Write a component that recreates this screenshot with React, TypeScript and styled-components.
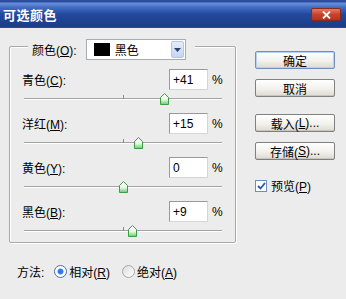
import styled, { createGlobalStyle } from "styled-components";

const GlobalStyle = createGlobalStyle`
  html, body {
    margin: 0;
    padding: 0;
    background: #ececec;
  }
  body {
    font-family: "Liberation Sans", "Noto Sans CJK SC", sans-serif;
    font-size: 12px;
    color: #000;
  }
`;

interface Channel {
  name: string;
  key: string;
  value: number;
}

const channels: Channel[] = [
  { name: "青色", key: "C", value: 41 },
  { name: "洋红", key: "M", value: 15 },
  { name: "黄色", key: "Y", value: 0 },
  { name: "黑色", key: "B", value: 9 },
];

const Window = styled.div`
  width: 346px;
  height: 299px;
  overflow: hidden;
  display: flex;
  flex-direction: column;
  background: #ececec;
`;

const TitleBar = styled.div`
  height: 28px;
  flex: none;
  box-sizing: border-box;
  display: flex;
  align-items: center;
  justify-content: space-between;
  padding: 0 5px 0 3px;
  background: linear-gradient(
    180deg,
    #2b4e9e 0px,
    #2b4e9e 2px,
    #6b90da 3px,
    #4470c6 7px,
    #24499c 14px,
    #1b3d88 26px,
    #2a4f9a 28px
  );
`;

const Title = styled.div`
  color: #fff;
  font-family: "Noto Sans CJK SC", sans-serif;
  font-weight: 700;
  font-size: 13px;
  letter-spacing: 0.5px;
  padding-top: 1px;
`;

const CloseButton = styled.div`
  width: 30px;
  height: 13px;
  box-sizing: border-box;
  border: 1px solid #8a2a1e;
  border-radius: 2px;
  background: linear-gradient(180deg, #e57a62, #c9432c 50%, #b23420);
  display: flex;
  align-items: center;
  justify-content: center;
  margin-top: 1px;
`;

const Body = styled.div`
  flex: 1;
  display: flex;
`;

const LeftColumn = styled.div`
  width: 236px;
  flex: none;
  box-sizing: border-box;
  padding: 18px 0 0 9px;
  display: flex;
  flex-direction: column;
`;

const GroupBox = styled.div`
  box-sizing: border-box;
  width: 227px;
  border: 1px solid #a9a9a9;
  border-radius: 2px;
  box-shadow: 1px 1px 0 #fff, inset 1px 1px 0 #fff;
  padding-bottom: 5px;
  display: flex;
  flex-direction: column;
`;

const GroupHeader = styled.div`
  align-self: flex-start;
  display: flex;
  align-items: center;
  margin: -8px 0 0 18px;
  padding: 0 9px 0 4px;
  background: #ececec;
`;

const HeaderLabel = styled.span`
  margin-right: 9px;
`;

const Dropdown = styled.div`
  width: 100px;
  height: 21px;
  box-sizing: border-box;
  border: 1px solid #a5acb2;
  background: #fff;
  display: flex;
  align-items: center;
  padding-left: 7px;
`;

const Swatch = styled.div`
  width: 16px;
  height: 13px;
  background: #000;
`;

const DropdownText = styled.span`
  margin-left: 5px;
`;

const DropdownArrow = styled.div`
  margin-left: auto;
  margin-right: 1px;
  width: 13px;
  height: 17px;
  box-sizing: border-box;
  border: 1px solid #b6c7ea;
  border-radius: 2px;
  background: linear-gradient(180deg, #e4ecfb, #c5d5f3);
  display: flex;
  align-items: center;
  justify-content: center;
`;

const ChannelList = styled.div`
  display: flex;
  flex-direction: column;
  gap: 8px;
  margin-top: 9px;
`;

const ChannelRow = styled.div`
  display: flex;
  flex-direction: column;
`;

const FieldLine = styled.div`
  display: flex;
  align-items: center;
  height: 21px;
  padding-left: 12px;
`;

const FieldLabel = styled.span`
  width: 147px;
`;

const ValueBox = styled.div`
  width: 39px;
  height: 21px;
  box-sizing: border-box;
  background: #fff;
  border: 1px solid;
  border-color: #9a9a9a #d6d6d6 #d6d6d6 #9a9a9a;
  padding-left: 3px;
  display: flex;
  align-items: center;
`;

const Percent = styled.span`
  margin-left: 4px;
`;

const SliderWrap = styled.div`
  position: relative;
  height: 12px;
  margin: 3px 13px 0 14px;
`;

const Track = styled.div`
  margin-top: 5px;
  height: 0;
  border-top: 1px solid #a3a3a3;
  border-bottom: 1px solid #ffffff;
`;

const Tick = styled.div`
  position: absolute;
  left: 50%;
  top: 2px;
  width: 1px;
  height: 4px;
  background: #8c8c8c;
`;

const Thumb = styled.svg`
  position: absolute;
  top: 0;
  width: 9px;
  height: 12px;
  margin-left: -4px;
`;

const MethodRow = styled.div`
  display: flex;
  align-items: center;
  height: 16px;
  margin-top: 20px;
  padding-left: 8px;
`;

const MethodLabel = styled.span`
  margin-right: 10px;
`;

const RadioOption = styled.div`
  display: flex;
  align-items: center;
  gap: 2px;
  margin-right: 12px;
`;

const RadioCircle = styled.div<{ checked: boolean }>`
  width: 13px;
  height: 13px;
  box-sizing: border-box;
  border-radius: 50%;
  border: 1px solid ${(props) => (props.checked ? "#4a6fa8" : "#a8a8a8")};
  background: ${(props) =>
    props.checked
      ? "radial-gradient(circle, #2c6fe0 0, #3f80ec 2.5px, #ffffff 3.5px)"
      : "linear-gradient(135deg, #dcdcdc, #ffffff)"};
`;

const RightColumn = styled.div`
  display: flex;
  flex-direction: column;
  margin-left: 19px;
  padding-top: 23px;
`;

const Button = styled.div<{ primary?: boolean; gap: number }>`
  width: 80px;
  height: 18px;
  box-sizing: border-box;
  margin-top: ${(props) => props.gap}px;
  border: 1px solid ${(props) => (props.primary ? "#6d8fc4" : "#808080")};
  border-radius: 2px;
  background: linear-gradient(180deg, #ffffff, #f2f1ec 55%, #dcdad0);
  box-shadow: ${(props) =>
    props.primary ? "inset 0 0 0 1px #b9d0f3" : "inset 0 -1px 0 #c9c7bc"};
  display: flex;
  align-items: center;
  justify-content: center;
`;

const CheckRow = styled.div`
  display: flex;
  align-items: center;
  gap: 4px;
  margin-top: 17px;
`;

const CheckBox = styled.div`
  width: 12px;
  height: 12px;
  box-sizing: border-box;
  border: 1px solid #6f8fb8;
  background: #fff;
  display: flex;
  align-items: center;
  justify-content: center;
`;

function SliderThumb() {
  return (
    <>
      <defs>
        <linearGradient id="thumbFill" x1="0" y1="0" x2="0" y2="1">
          <stop offset="0" stopColor="#ffffff" />
          <stop offset="0.55" stopColor="#e8f7e8" />
          <stop offset="1" stopColor="#6cc86c" />
        </linearGradient>
      </defs>
      <polygon
        points="0.5,4.5 4.5,0.5 8.5,4.5 8.5,11.5 0.5,11.5"
        fill="url(#thumbFill)"
        stroke="#3d9c3d"
        strokeWidth="1"
      />
    </>
  );
}

function App() {
  return (
    <Window>
      <GlobalStyle />
      <TitleBar>
        <Title>可选颜色</Title>
        <CloseButton>
          <svg width="9" height="8" viewBox="0 0 9 8">
            <path d="M1 0.5 L8 7.5 M8 0.5 L1 7.5" stroke="#fff" strokeWidth="1.8" />
          </svg>
        </CloseButton>
      </TitleBar>
      <Body>
        <LeftColumn>
          <GroupBox>
            <GroupHeader>
              <HeaderLabel>
                颜色(<u>O</u>):
              </HeaderLabel>
              <Dropdown>
                <Swatch />
                <DropdownText>黑色</DropdownText>
                <DropdownArrow>
                  <svg width="7" height="4" viewBox="0 0 7 4">
                    <polygon points="0,0 7,0 3.5,4" fill="#2a3f6c" />
                  </svg>
                </DropdownArrow>
              </Dropdown>
            </GroupHeader>
            <ChannelList>
              {channels.map((c) => (
                <ChannelRow key={c.key}>
                  <FieldLine>
                    <FieldLabel>
                      {c.name}(<u>{c.key}</u>):
                    </FieldLabel>
                    <ValueBox>{c.value > 0 ? `+${c.value}` : `${c.value}`}</ValueBox>
                    <Percent>%</Percent>
                  </FieldLine>
                  <SliderWrap>
                    <Track />
                    <Tick />
                    <Thumb
                      viewBox="0 0 9 12"
                      style={{ left: `${((c.value + 100) / 200) * 100}%` }}
                    >
                      <SliderThumb />
                    </Thumb>
                  </SliderWrap>
                </ChannelRow>
              ))}
            </ChannelList>
          </GroupBox>
          <MethodRow>
            <MethodLabel>方法:</MethodLabel>
            <RadioOption>
              <RadioCircle checked />
              <span>
                相对(<u>R</u>)
              </span>
            </RadioOption>
            <RadioOption>
              <RadioCircle checked={false} />
              <span>
                绝对(<u>A</u>)
              </span>
            </RadioOption>
          </MethodRow>
        </LeftColumn>
        <RightColumn>
          <Button primary gap={0}>确定</Button>
          <Button gap={10}>取消</Button>
          <Button gap={17}>
            载入(<u>L</u>)...
          </Button>
          <Button gap={10}>
            存储(<u>S</u>)...
          </Button>
          <CheckRow>
            <CheckBox>
              <svg width="9" height="8" viewBox="0 0 9 8">
                <path d="M1 4 L3.5 6.5 L8 1" stroke="#2354b8" strokeWidth="1.8" fill="none" />
              </svg>
            </CheckBox>
            <span>
              预览(<u>P</u>)
            </span>
          </CheckRow>
        </RightColumn>
      </Body>
    </Window>
  );
}

export default App;
